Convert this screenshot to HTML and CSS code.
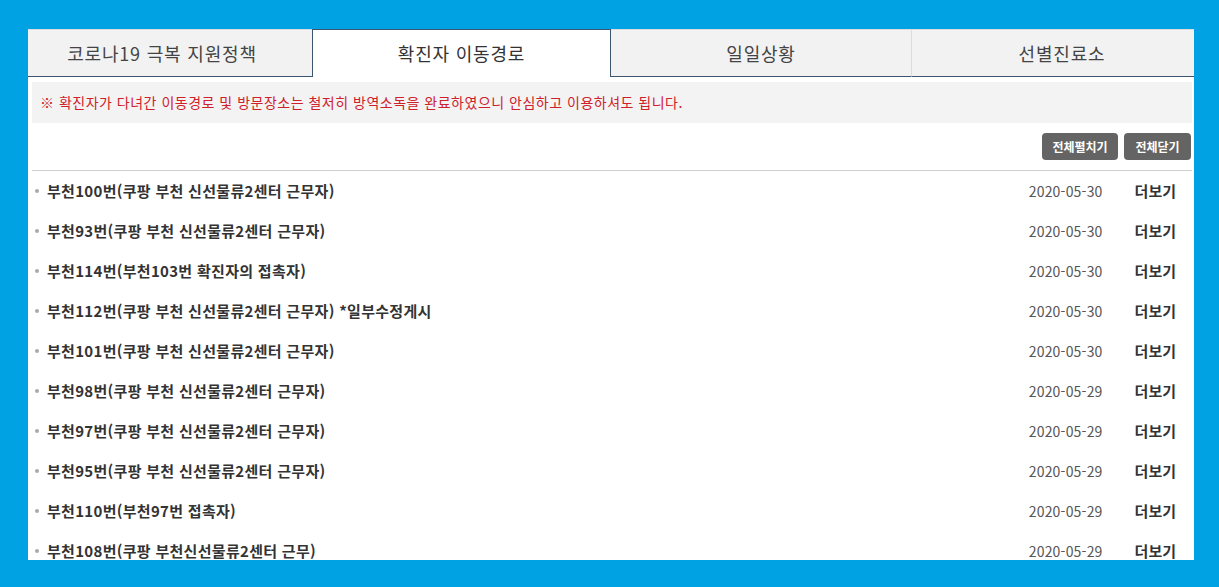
FILE: index.html
```html
<!DOCTYPE html>
<html lang="ko">
<head>
<meta charset="UTF-8">
<meta name="viewport" content="width=device-width, initial-scale=1.0">
<title>확진자 이동경로</title>
<link rel="stylesheet" href="styles.css">
</head>
<body>

<div class="panel">
    <ul class="tabs">
        <li class="tab first">코로나19 극복 지원정책</li>
        <li class="tab active">확진자 이동경로</li>
        <li class="tab">일일상황</li>
        <li class="tab last">선별진료소</li>
    </ul>

    <p class="notice">※ 확진자가 다녀간 이동경로 및 방문장소는 철저히 방역소독을 완료하였으니 안심하고 이용하셔도 됩니다.</p>

    <div class="btn-row">
        <button class="btn btn-open">전체펼치기</button>
        <button class="btn btn-close">전체닫기</button>
    </div>

    <ul class="route-list">
        <li class="route"><span class="route-title">부천100번(쿠팡 부천 신선물류2센터 근무자)</span><span class="route-date">2020-05-30</span><span class="route-more">더보기</span></li>
        <li class="route"><span class="route-title">부천93번(쿠팡 부천 신선물류2센터 근무자)</span><span class="route-date">2020-05-30</span><span class="route-more">더보기</span></li>
        <li class="route"><span class="route-title">부천114번(부천103번 확진자의 접촉자)</span><span class="route-date">2020-05-30</span><span class="route-more">더보기</span></li>
        <li class="route"><span class="route-title">부천112번(쿠팡 부천 신선물류2센터 근무자) *일부수정게시</span><span class="route-date">2020-05-30</span><span class="route-more">더보기</span></li>
        <li class="route"><span class="route-title">부천101번(쿠팡 부천 신선물류2센터 근무자)</span><span class="route-date">2020-05-30</span><span class="route-more">더보기</span></li>
        <li class="route"><span class="route-title">부천98번(쿠팡 부천 신선물류2센터 근무자)</span><span class="route-date">2020-05-29</span><span class="route-more">더보기</span></li>
        <li class="route"><span class="route-title">부천97번(쿠팡 부천 신선물류2센터 근무자)</span><span class="route-date">2020-05-29</span><span class="route-more">더보기</span></li>
        <li class="route"><span class="route-title">부천95번(쿠팡 부천 신선물류2센터 근무자)</span><span class="route-date">2020-05-29</span><span class="route-more">더보기</span></li>
        <li class="route"><span class="route-title">부천110번(부천97번 접촉자)</span><span class="route-date">2020-05-29</span><span class="route-more">더보기</span></li>
        <li class="route"><span class="route-title">부천108번(쿠팡 부천신선물류2센터 근무)</span><span class="route-date">2020-05-29</span><span class="route-more">더보기</span></li>
    </ul>
</div>

</body>
</html>
```

FILE: styles.css
```css
/* 확진자 이동경로 */
body {
    margin: 0;
    background-color: #00a2e4;
    font-family: "Noto Sans CJK KR", "Noto Sans", sans-serif;
}
.panel {
    width: 1166px;
    height: 531px;
    margin: 29px 0 0 28px;
    padding: 0 2px 0 4px;
    box-sizing: border-box;
    background-color: #fff;
    overflow: hidden;
}
.tabs {
    display: grid;
    grid-template-columns: 284px 299px 300px 1fr;
    margin: 0 -2px 0 -4px;
    padding: 0;
    list-style: none;
}
.tab {
    height: 48px;
    line-height: 46px;
    text-align: center;
    font-size: 18px;
    letter-spacing: 0.8px;
    color: #444;
    background-color: #f2f2f2;
    border-top: 1px solid #dcdcdc;
    border-bottom: 1px solid #3d5670;
    box-sizing: border-box;
}
.tab.first {
    padding-right: 16px;
}
.tab.active {
    background-color: #fff;
    color: #333;
    border: 1px solid #3d5670;
    border-bottom: none;
}
.tab.last {
    border-left: 1px solid #dcdcdc;
    padding-left: 18px;
}
.notice {
    margin: 5px 0 0;
    height: 41px;
    line-height: 40px;
    padding-left: 8px;
    background-color: #f3f3f3;
    color: #d0202a;
    font-size: 14px;
    letter-spacing: 0.5px;
}
.btn-row {
    display: flex;
    justify-content: flex-end;
    gap: 6px;
    padding: 10px 1px 10px 0;
}
.btn {
    height: 27px;
    padding: 0;
    border: none;
    border-radius: 4px;
    background-color: #646464;
    color: #fff;
    font-family: inherit;
    font-size: 12px;
    font-weight: bold;
}
.btn-open {
    width: 76px;
}
.btn-close {
    width: 67px;
}
.route-list {
    margin: 0;
    padding: 0;
    list-style: none;
    border-top: 1px solid #cfcfcf;
}
.route {
    display: flex;
    align-items: center;
    height: 40px;
    padding-left: 15px;
    padding-bottom: 1px;
    box-sizing: border-box;
    position: relative;
}
.route::before {
    content: "";
    position: absolute;
    left: 3px;
    top: 18px;
    width: 4px;
    height: 4px;
    border-radius: 50%;
    background-color: #aaa;
}
.route-title {
    flex: 1;
    font-size: 15px;
    letter-spacing: 0.3px;
    font-weight: bold;
    color: #333;
}
.route-date {
    font-size: 14px;
    letter-spacing: 0.2px;
    color: #555;
    margin-right: 32px;
}
.route-more {
    font-size: 15px;
    font-weight: bold;
    color: #333;
    margin-right: 16px;
}
```
